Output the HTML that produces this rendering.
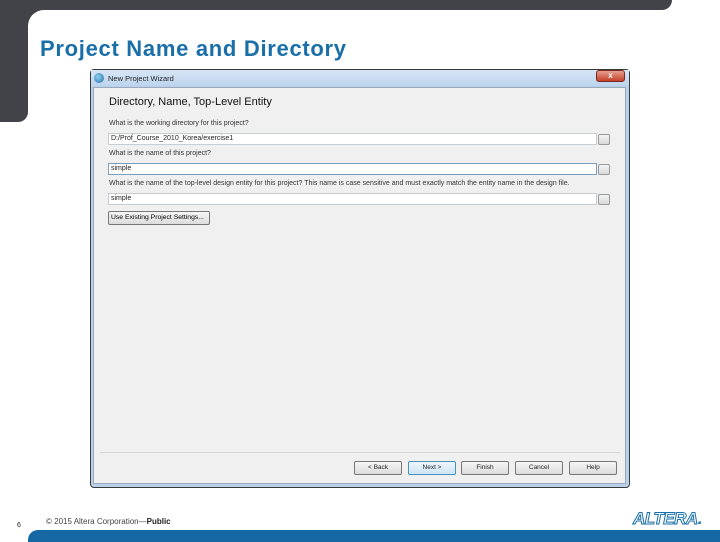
<!DOCTYPE html>
<html><head><style>
*{margin:0;padding:0;box-sizing:border-box}
body{width:720px;height:540px;position:relative;background:#fff;font-family:"Liberation Sans",sans-serif;overflow:hidden}
.a{position:absolute}
.lbl{position:absolute;left:109px;font-size:7px;color:#333;white-space:nowrap}
.inp{position:absolute;left:108px;width:489px;height:12px;background:#fff;border:1px solid #c8cdd4;font-size:7px;padding:1px 2px;color:#222}
.br{position:absolute;left:598px;width:12px;height:11px;border:1px solid #9a9a9a;border-radius:2px;background:linear-gradient(#f4f4f4,#d8d8d8)}
.btn{position:absolute;top:461px;width:48px;height:14px;border:1px solid #777;border-radius:2px;background:linear-gradient(#f6f6f6,#dcdcdc);font-size:6.5px;text-align:center;line-height:12px;color:#222}
</style></head><body>
<div class="a" style="left:0;top:0;width:672px;height:10px;background:#424348;border-bottom-right-radius:10px"></div>
<div class="a" style="left:0;top:0;width:28px;height:122px;background:#424348;border-bottom-right-radius:10px"></div>
<div class="a" style="left:28px;top:10px;width:30px;height:30px;background:#424348"></div>
<div class="a" style="left:28px;top:10px;width:40px;height:40px;background:#fff;border-top-left-radius:16px"></div>
<div class="a" style="left:40px;top:36px;font-size:22px;font-weight:bold;color:#1a6fa8;letter-spacing:0.7px;white-space:nowrap">Project Name and Directory</div>

<div class="a" style="left:90px;top:69px;width:540px;height:419px;background:#b9d1ea;border:1px solid #3a3a3a;border-radius:4px"></div>
<div class="a" style="left:91px;top:70px;width:538px;height:16px;background:linear-gradient(#d7e6f6,#bcd4ee)"></div>
<div class="a" style="left:94px;top:73px;width:10px;height:10px;border-radius:50%;background:radial-gradient(circle at 40% 40%,#8fd0f0,#1f6fa8)"></div>
<div class="a" style="left:108px;top:74px;font-size:7.5px;color:#222">New Project Wizard</div>
<div class="a" style="left:596px;top:70px;width:29px;height:12px;background:linear-gradient(#e8a090,#c4402c);border:1px solid #7a2a20;border-radius:3px;color:#fff;font-size:8px;font-weight:bold;text-align:center;line-height:10px">x</div>
<div class="a" style="left:93px;top:87px;width:533px;height:397px;background:#f0f0f0;border:1px solid #9aaabe"></div>
<div class="a" style="left:109px;top:96px;font-size:11px;color:#111;white-space:nowrap">Directory, Name, Top-Level Entity</div>
<div class="lbl" style="top:120px">What is the working directory for this project?</div>
<div class="inp" style="top:133px">D:/Prof_Course_2010_Korea/exercise1</div><div class="br" style="top:134px"></div>
<div class="lbl" style="top:150px">What is the name of this project?</div>
<div class="inp" style="top:163px;border-color:#7b9ebd">simple</div><div class="br" style="top:164px"></div>
<div class="lbl" style="top:180px">What is the name of the top-level design entity for this project? This name is case sensitive and must exactly match the entity name in the design file.</div>
<div class="inp" style="top:193px">simple</div><div class="br" style="top:194px"></div>
<div class="a" style="left:108px;top:211px;width:102px;height:14px;border:1px solid #777;border-radius:2px;background:linear-gradient(#f6f6f6,#dcdcdc);font-size:6.8px;line-height:12px;padding-left:2px;white-space:nowrap">Use Existing Project Settings...</div>
<div class="a" style="left:100px;top:452px;width:520px;height:1px;background:#d5d5d5"></div>
<div class="btn" style="left:354px">&lt; Back</div>
<div class="btn" style="left:408px;border-color:#4a90c0;background:linear-gradient(#eef6fc,#cfe4f4)">Next &gt;</div>
<div class="btn" style="left:461px">Finish</div>
<div class="btn" style="left:515px">Cancel</div>
<div class="btn" style="left:569px">Help</div>

<div class="a" style="left:17px;top:522px;font-size:7px;color:#222">6</div>
<div class="a" style="left:46px;top:517px;font-size:8px;color:#444;white-space:nowrap">© 2015 Altera Corporation—<b style="color:#222">Public</b></div>
<div class="a" style="left:633px;top:509px;font-size:17px;font-weight:bold;font-style:italic;color:#fff;-webkit-text-stroke:1px #1a6fa8;letter-spacing:-0.5px">ALTERA<span style="color:#1a6fa8;-webkit-text-stroke:0">.</span></div>
<div class="a" style="left:28px;top:530px;width:692px;height:12px;background:#1668a4;border-top-left-radius:10px"></div>
</body></html>
